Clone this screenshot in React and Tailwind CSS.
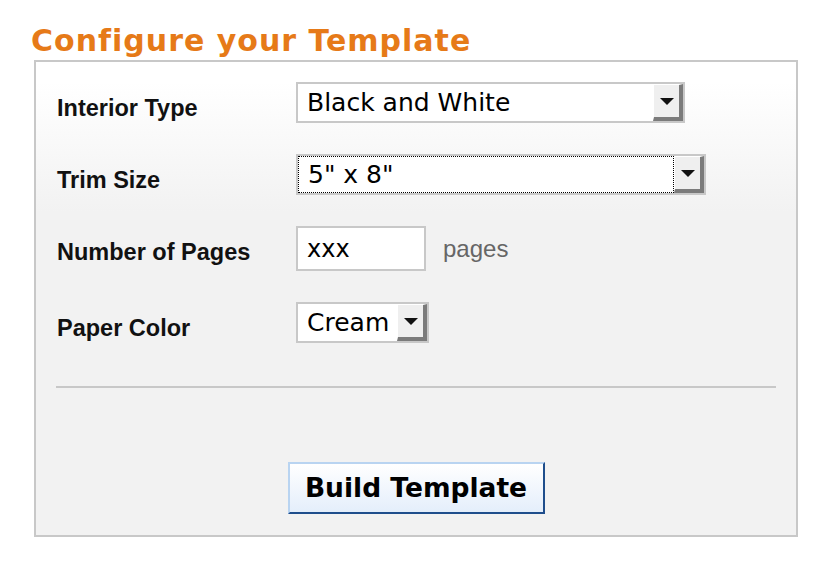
import React from 'react';

const labelFont = { fontFamily: '"Liberation Sans", Arial, sans-serif' };
const ctrlFont = { fontFamily: '"DejaVu Sans", Verdana, sans-serif' };

const Arrow = () => (
  <div className="w-[30px] h-full flex items-center justify-center bg-[#efefef] border-t border-l border-t-white border-l-white border-r-[4px] border-b-[4px] border-r-[#7b7b7b] border-b-[#7b7b7b] box-border">
    <svg width="14" height="7" viewBox="0 0 14 7">
      <polygon points="0,0 14,0 7,7" fill="#111" />
    </svg>
  </div>
);

const Select = ({ value, width, focused }) => (
  <div className={`${width} h-[41px] border-2 border-[#c8c8c8] bg-white flex box-border`} style={ctrlFont}>
    <div className="flex-1 flex items-center">
      <span
        className={`flex-1 h-full flex items-center pl-[9px] text-[25px] text-black leading-none ${focused ? 'border border-dotted border-black pl-[8px]' : ''}`}
      >
        {value}
      </span>
    </div>
    <Arrow />
  </div>
);

const Row = ({ label, children }) => (
  <div className="flex items-start">
    <div className="w-[240px] pt-[12px] pl-px text-[23.5px] leading-[28px] font-bold text-[#111]" style={labelFont}>
      {label}
    </div>
    <div className="flex items-center">{children}</div>
  </div>
);

const App = () => {
  return (
    <div className="w-[838px] h-[568px] bg-white pl-[31px] pt-[26px] box-border">
      <h1
        className="text-[30px] leading-[29px] font-bold text-[#e67a18] tracking-[1px]"
        style={{ fontFamily: '"DejaVu Sans", Verdana, sans-serif' }}
      >
        Configure your Template
      </h1>

      <div className="mt-[5px] ml-[3px] w-[764px] border-2 border-[#c8c8c8] box-border px-5 pt-5 pb-[21px] bg-[linear-gradient(to_bottom,#ffffff_0px,#ffffff_20px,#f2f2f2_150px)]">
        <div className="flex flex-col gap-[31px]">
          <Row label="Interior Type">
            <Select value="Black and White" width="w-[389px]" />
          </Row>
          <Row label="Trim Size">
            <Select value={'5" x 8"'} width="w-[410px]" focused />
          </Row>
          <Row label="Number of Pages">
            <div className="w-[130px] h-[45px] border-2 border-[#c8c8c8] bg-white flex items-center pl-[9px] box-border text-[24px] text-black" style={ctrlFont}>
              xxx
            </div>
            <span className="ml-[17px] text-[24px] text-[#666]" style={labelFont}>pages</span>
          </Row>
          <Row label="Paper Color">
            <Select value="Cream" width="w-[133px]" />
          </Row>
        </div>

        <div className="mt-[43px] h-[2px] bg-[#c8c8c8]" />

        <div className="mt-[74px] flex justify-center">
          <button
            className="w-[257px] h-[52px] box-border border-2 border-t-[#b9d4f1] border-l-[#b9d4f1] border-r-[#1f4e8c] border-b-[#1f4e8c] bg-[linear-gradient(to_bottom,#ffffff,#e4eefb)] text-[26.5px] font-bold text-black"
            style={ctrlFont}
          >
            Build Template
          </button>
        </div>
      </div>
    </div>
  );
};

export default App;
